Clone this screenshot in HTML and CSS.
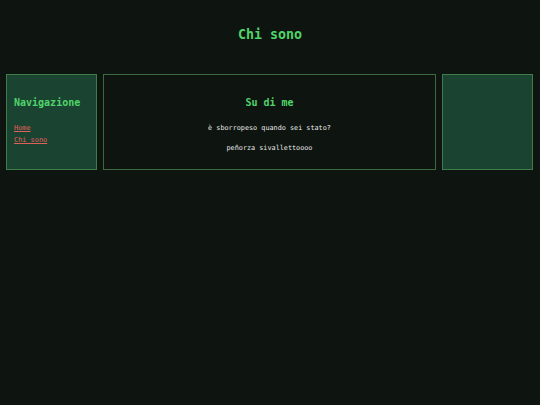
FILE: index.html
```html
<!DOCTYPE html>
<html lang="it">
<head>
<meta charset="utf-8">
<title>Chi sono</title>
<link rel="stylesheet" href="styles.css">
</head>
<body>
<header class="header">
  <h1 class="title">Chi sono</h1>
</header>
<main class="layout">
  <nav class="box side">
    <h2 class="heading">Navigazione</h2>
    <ul class="links">
      <li><a href="#">Home</a></li>
      <li><a href="#">Chi sono</a></li>
    </ul>
  </nav>
  <section class="box content">
    <h2 class="heading">Su di me</h2>
    <p class="text">è sborropeso quando sei stato?</p>
    <p class="text">peñorza sivallettoooo</p>
  </section>
  <aside class="box side right"></aside>
</main>
</body>
</html>
```
FILE: styles.css
```css
html, body {
  margin: 0;
  padding: 0;
  background: #0e140f;
  color: #dcdcdc;
  font-family: "DejaVu Sans Mono", "Liberation Mono", monospace;
}
.header {
  padding-top: 27px;
  height: 47px;
  text-align: center;
}
.title {
  margin: 0;
  font-size: 13.3px;
  line-height: 16px;
  color: #4fd46a;
  font-weight: bold;
}
.layout {
  display: flex;
  gap: 6px;
  padding: 0 7px 0 6px;
  height: 96px;
}
.box {
  box-sizing: border-box;
  border: 1px solid #3f7d48;
  padding: 22px 7px 0;
}
.side {
  flex: 0 0 91px;
  background: #1b4332;
}
.right {
  flex-basis: 91px;
}
.content {
  flex: 1;
  background: #0e140f;
  border-color: #3a6a3d;
  text-align: center;
}
.heading {
  margin: 0;
  font-size: 10px;
  line-height: 12px;
  color: #4fd46a;
  font-weight: bold;
}
.links {
  list-style: none;
  margin: 13px 0 0;
  padding: 0;
}
.links li {
  font-size: 6.9px;
  line-height: 12px;
}
.links a {
  color: #e0605a;
  text-decoration: underline;
}
.text {
  margin: 15px 0 0;
  font-size: 6.8px;
  line-height: 9px;
  color: #e8e8e8;
}
.text + .text {
  margin-top: 11px;
}
```
